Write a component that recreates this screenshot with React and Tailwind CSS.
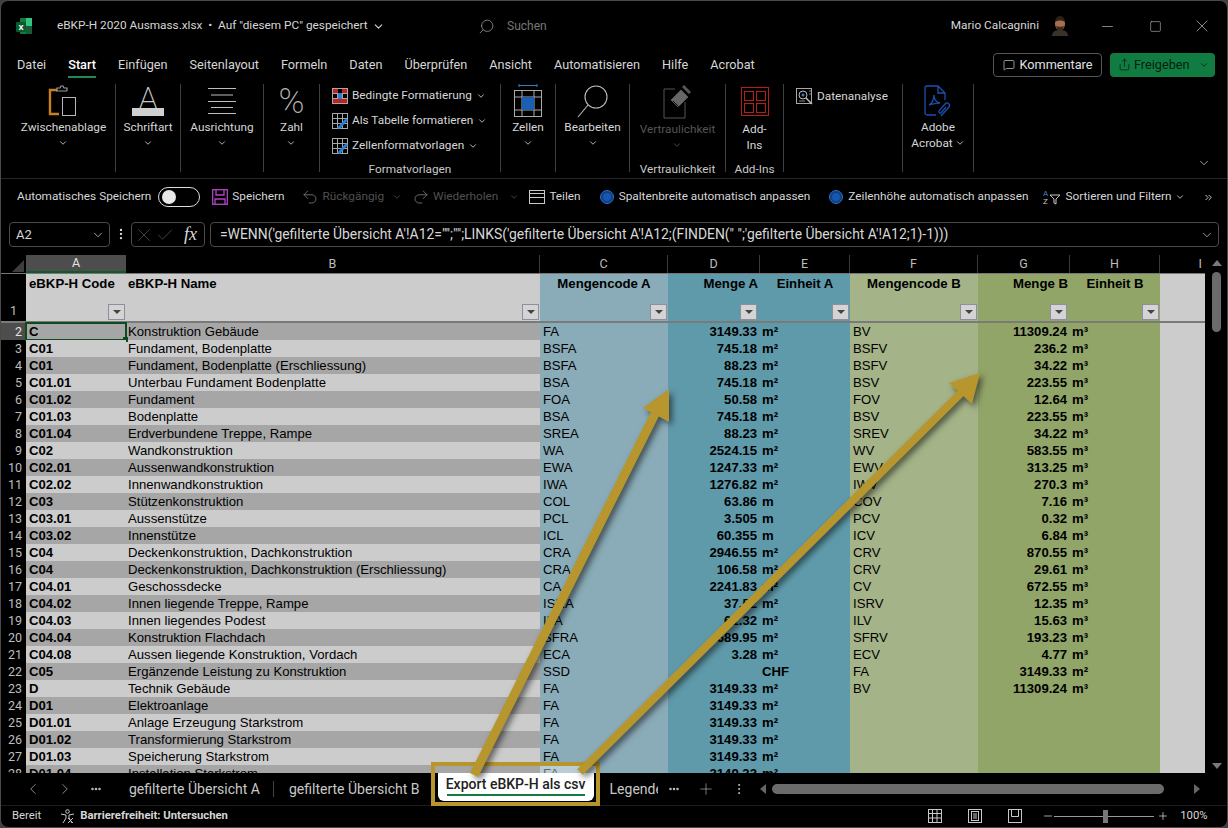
import React from "react";
import { ChevronDown, ChevronLeft, ChevronRight, Minus, Plus, X, Check, Square, MoreHorizontal, MoreVertical, Search, MessageSquare, Share, Undo2, Redo2, ChevronsRight } from "lucide-react";

const rows = [
  [2, "C", "Konstruktion Gebäude", "FA", "3149.33", "m²", "BV", "11309.24", "m³"],
  [3, "C01", "Fundament, Bodenplatte", "BSFA", "745.18", "m²", "BSFV", "236.2", "m³"],
  [4, "C01", "Fundament, Bodenplatte (Erschliessung)", "BSFA", "88.23", "m²", "BSFV", "34.22", "m³"],
  [5, "C01.01", "Unterbau Fundament Bodenplatte", "BSA", "745.18", "m²", "BSV", "223.55", "m³"],
  [6, "C01.02", "Fundament", "FOA", "50.58", "m²", "FOV", "12.64", "m³"],
  [7, "C01.03", "Bodenplatte", "BSA", "745.18", "m²", "BSV", "223.55", "m³"],
  [8, "C01.04", "Erdverbundene Treppe, Rampe", "SREA", "88.23", "m²", "SREV", "34.22", "m³"],
  [9, "C02", "Wandkonstruktion", "WA", "2524.15", "m²", "WV", "583.55", "m³"],
  [10, "C02.01", "Aussenwandkonstruktion", "EWA", "1247.33", "m²", "EWV", "313.25", "m³"],
  [11, "C02.02", "Innenwandkonstruktion", "IWA", "1276.82", "m²", "IWV", "270.3", "m³"],
  [12, "C03", "Stützenkonstruktion", "COL", "63.86", "m", "COV", "7.16", "m³"],
  [13, "C03.01", "Aussenstütze", "PCL", "3.505", "m", "PCV", "0.32", "m³"],
  [14, "C03.02", "Innenstütze", "ICL", "60.355", "m", "ICV", "6.84", "m³"],
  [15, "C04", "Deckenkonstruktion, Dachkonstruktion", "CRA", "2946.55", "m²", "CRV", "870.55", "m³"],
  [16, "C04", "Deckenkonstruktion, Dachkonstruktion (Erschliessung)", "CRA", "106.58", "m²", "CRV", "29.61", "m³"],
  [17, "C04.01", "Geschossdecke", "CA", "2241.83", "m²", "CV", "672.55", "m³"],
  [18, "C04.02", "Innen liegende Treppe, Rampe", "ISRA", "37.52", "m²", "ISRV", "12.35", "m³"],
  [19, "C04.03", "Innen liegendes Podest", "ILA", "61.32", "m²", "ILV", "15.63", "m³"],
  [20, "C04.04", "Konstruktion Flachdach", "SFRA", "689.95", "m²", "SFRV", "193.23", "m³"],
  [21, "C04.08", "Aussen liegende Konstruktion, Vordach", "ECA", "3.28", "m²", "ECV", "4.77", "m³"],
  [22, "C05", "Ergänzende Leistung zu Konstruktion", "SSD", "", "CHF", "FA", "3149.33", "m²"],
  [23, "D", "Technik Gebäude", "FA", "3149.33", "m²", "BV", "11309.24", "m³"],
  [24, "D01", "Elektroanlage", "FA", "3149.33", "m²", "", "", ""],
  [25, "D01.01", "Anlage Erzeugung Starkstrom", "FA", "3149.33", "m²", "", "", ""],
  [26, "D01.02", "Transformierung Starkstrom", "FA", "3149.33", "m²", "", "", ""],
  [27, "D01.03", "Speicherung Starkstrom", "FA", "3149.33", "m²", "", "", ""],
  [28, "D01.04", "Installation Starkstrom", "FA", "3149.33", "m²", "", "", ""],
];

const Chev = ({ className = "" }) => <ChevronDown size={10} strokeWidth={2} className={className} />;

const ExcelIcon = () => (
  <svg width="18" height="18" viewBox="0 0 18 18">
    <rect x="5" y="1" width="12" height="16" rx="1" fill="#107c41" />
    <rect x="11" y="1" width="6" height="8" fill="#33c481" />
    <rect x="11" y="9" width="6" height="8" fill="#185c37" />
    <rect x="1" y="5" width="10" height="10" rx="1" fill="#0b5a2d" />
    <text x="6" y="13" textAnchor="middle" fontSize="8" fontWeight="700" fill="#fff" fontFamily="Roboto">X</text>
  </svg>
);

const Avatar = () => (
  <svg width="18" height="20" viewBox="0 0 18 20">
    <path d="M1 20c0-4 3-6 8-6s8 2 8 6z" fill="#3a3228" />
    <ellipse cx="9" cy="8" rx="5" ry="6.5" fill="#a5704f" />
    <path d="M4 6c0-4 3-6 5-6s5 2 5 6c-2-2-8-2-10 0z" fill="#2c211a" />
    <path d="M5 10c1 4 3 5 4 5s3-1 4-5c-1 1-7 1-8 0z" fill="#3b2a20" />
  </svg>
);

const ClipboardIcon = () => (
  <svg width="30" height="32" viewBox="0 0 30 32" fill="none">
    <path d="M9 5H2v24h9" stroke="#c77f1e" strokeWidth="2.4" />
    <path d="M9 6V3h3l1-2h2l1 2h3v3M19 6H8" stroke="#9a9a9a" strokeWidth="1.2" />
    <rect x="14.500" y="12.500" width="13" height="18" stroke="#b8b8b8" />
  </svg>
);

const FontIcon = () => (
  <svg width="32" height="30" viewBox="0 0 32 30">
    <text x="16" y="22" textAnchor="middle" fontSize="30" fontWeight="200" fill="#c8c8c8" fontFamily="Roboto">A</text>
    <rect x="0" y="22" width="32" height="8" fill="#cfcfcf" />
  </svg>
);

const AlignIcon = () => (
  <svg width="30" height="26" viewBox="0 0 30 26" stroke="#bdbdbd">
    <path d="M1 .5h28M4 7h22M1 13.500h28M4 19.500h22M1 25.500h28" />
  </svg>
);

const PercentIcon = () => (
  <div className="text-[35px] leading-[35px] font-extralight text-[#b8b8b8]">%</div>
);

const SmallGrid = ({ children }) => (
  <svg width="16" height="16" viewBox="0 0 16 16" fill="none" className="shrink-0">
    <rect x=".5" y=".5" width="15" height="15" stroke="#a8a8a8" />
    <path d="M.5 5.500h15M.5 10.500h15M5.500.5v15M10.500.5v15" stroke="#a8a8a8" />
    {children}
  </svg>
);

const CellsIcon = () => (
  <svg width="30" height="34" viewBox="0 0 30 34" fill="none">
    <path d="M6 1.500h18M6 0v3M24 0v3" stroke="#2f7fc4" />
    <rect x="1.500" y="6.500" width="27" height="26" stroke="#aaa" />
    <path d="M1.500 13h27M1.500 26h27M9 6.500v26M21 6.500v26" stroke="#aaa" />
    <rect x="9" y="13" width="12" height="13" fill="#1c5fb0" />
  </svg>
);

const FindIcon = () => (
  <svg width="32" height="34" viewBox="0 0 32 34" fill="none" stroke="#bdbdbd" strokeWidth="1.100">
    <circle cx="19" cy="13" r="11" />
    <path d="M11 21 1 33" />
  </svg>
);

const SensitivityIcon = () => (
  <svg width="28" height="34" viewBox="0 0 28 34" fill="none" stroke="#555">
    <path d="M12 4H1v29h21V17" />
    <path d="M8 15 18 5l7 7-10 10z" fill="#666" />
    <path d="M20 1l7 7" strokeWidth="3" />
    <path d="M10 16l6 6" stroke="#111" />
  </svg>
);

const AddInsIcon = () => (
  <svg width="28" height="30" viewBox="0 0 28 30" fill="none" stroke="#b3201b">
    <rect x=".5" y=".5" width="27" height="28" />
    <rect x="3.500" y="4.500" width="9" height="9" />
    <rect x="15.500" y="4.500" width="9" height="9" />
    <rect x="3.500" y="16.500" width="9" height="9" />
    <rect x="15.500" y="16.500" width="9" height="9" />
  </svg>
);

const AnalysisIcon = () => (
  <svg width="17" height="17" viewBox="0 0 17 17" fill="none" className="shrink-0">
    <rect x=".5" y=".5" width="15" height="15" stroke="#a8a8a8" />
    <circle cx="7" cy="7" r="4" stroke="#bdbdbd" />
    <circle cx="7" cy="7" r="1.500" fill="#2f7fc4" />
    <path d="M10 10l6 6" stroke="#bdbdbd" strokeWidth="1.500" />
    <path d="M13 3h2M13 6h2M3 13h6" stroke="#888" />
  </svg>
);

const AcrobatIcon = () => (
  <svg width="28" height="34" viewBox="0 0 28 34" fill="none" stroke="#1b4fb0" strokeWidth="1.300">
    <path d="M12 30H3a2 2 0 0 1-2-2V3a2 2 0 0 1 2-2h11l7 7v7M14 1v7h7" />
    <path d="M5 20c3-1 5-6 5-10 0 4 2 7 6 8-4 0-7 1-11 2z" />
    <path d="M17 31l8-9a2.500 2.500 0 0 0-4-3l-6 7a1.500 1.500 0 0 0 2 2l5-6" />
  </svg>
);

const BigButton = ({ icon, label, label2, chev = true, dim = false, iconClass = "h-[34px]" }) => (
  <div className={`flex flex-col items-center text-[11.8px] leading-[16px] ${dim ? "text-[#555]" : "text-[#d6d6d6]"}`}>
    <div className={`flex items-center justify-center ${iconClass}`}>{icon}</div>
    <div className="mt-[1px] whitespace-nowrap">{label}</div>
    {label2 && <div className="whitespace-nowrap">{label2}</div>}
    {chev && <Chev className="mt-[3px]" />}
  </div>
);

const Group = ({ className, label, children }) => (
  <div className={`h-[88px] shrink-0 border-r border-[#3f3f3f] flex flex-col items-center ${className}`}>
    <div className="h-[74px] shrink-0 w-full flex justify-center">{children}</div>
    {label && <div className="mt-[4px] shrink-0 text-[11.8px] leading-[14px] text-[#c8c8c8] whitespace-nowrap">{label}</div>}
  </div>
);

const StyleRow = ({ icon, label }) => (
  <div className="flex items-center gap-[4px] h-[26px] text-[11.8px] text-[#d6d6d6] whitespace-nowrap">
    {icon}
    <span>{label}</span>
    <Chev />
  </div>
);

const FilterBtn = () => (
  <div className="w-[17px] h-[16px] border border-[#8d8f9c] bg-[#d4d4d4] flex items-center justify-center mb-[1px] mr-[1px]">
    <div className="w-0 h-0 border-x-[4px] border-x-transparent border-t-[4px] border-t-[#444]" />
  </div>
);

const HeadCell = ({ className, textClass = "", label }) => (
  <div className={`h-full shrink-0 flex flex-col justify-between ${className}`}>
    <div className={`font-bold text-[13.2px] leading-[17px] pt-[1px] whitespace-nowrap ${textClass}`}>{label}</div>
    <div className="flex justify-end"><FilterBtn /></div>
  </div>
);

const ColHead = ({ className, label }) => (
  <div className={`h-full shrink-0 flex items-center justify-center border-r border-[#3a3a3a] text-[#bdbdbd] text-[12.5px] ${className}`}>{label}</div>
);

const Row = ({ row }) => {
  const [n, a, b, c, d, e, f, g, h] = row;
  const even = n % 2 === 0;
  const stripe = even ? "bg-[#a6a6a6]" : "bg-[#cccccc]";
  return (
    <div className="flex h-[17px] shrink-0 text-[13.15px] leading-[17px] text-black whitespace-nowrap">
      <div className={`w-[25px] shrink-0 pr-[4px] text-right text-[12.5px] [font-family:Roboto,sans-serif] ${n === 2 ? "bg-[#4d4d4d] text-[#e5e5e5]" : "text-[#bdbdbd]"}`}>{n}</div>
      <div className={`relative w-[100px] shrink-0 pl-[3px] font-bold ${stripe}`}>
        {a}
        {n === 2 && (
          <div className="absolute -inset-[1px] border-2 border-[#0c4a1f]">
            <div className="absolute -right-[3px] -bottom-[3px] w-[5px] h-[5px] bg-[#0c4a1f]" />
          </div>
        )}
      </div>
      <div className={`w-[414px] shrink-0 pl-[2px] overflow-hidden ${stripe}`}>{b}</div>
      <div className="w-[128px] shrink-0 pl-[3px] bg-[#8aacb8]">{c}</div>
      <div className="w-[92px] shrink-0 pr-[3px] text-right font-bold bg-[#5f9aab]">{d}</div>
      <div className="w-[90px] shrink-0 pl-[2px] font-bold bg-[#5f9aab]">{e}</div>
      <div className="w-[128px] shrink-0 pl-[3px] bg-[#a5b388]">{f}</div>
      <div className="w-[92px] shrink-0 pr-[3px] text-right font-bold bg-[#92a568]">{g}</div>
      <div className="w-[90px] shrink-0 pl-[2px] font-bold bg-[#92a568]">{h}</div>
      <div className="w-[45px] shrink-0 bg-[#cccccc]" />
    </div>
  );
};

export default function App() {
  return (
    <div className="relative w-[1228px] h-[828px] overflow-hidden bg-[#404040]">
      <div className="w-full h-full flex flex-col bg-black border border-[#4a4a4a] rounded-[8px] overflow-hidden text-[#d6d6d6] [font-family:Roboto,sans-serif] text-[13px]">
        {/* Title bar */}
        <div className="h-[44px] shrink-0 flex items-center pl-[14px] pt-[6px]">
          <ExcelIcon />
          <div className="ml-[24px] flex items-center w-[421px] text-[11.8px] whitespace-nowrap">
            <span>eBKP-H 2020 Ausmass.xlsx&nbsp;&nbsp;•&nbsp;&nbsp;Auf "diesem PC" gespeichert</span>
            <ChevronDown size={13} className="ml-[4px]" />
          </div>
          <Search size={17} strokeWidth={1.1} className="-scale-x-100 text-[#9a9a9a]" />
          <span className="ml-[12px] text-[12px] text-[#777]">Suchen</span>
          <span className="ml-auto text-[11.8px] whitespace-nowrap">Mario Calcagnini</span>
          <div className="ml-[12px]"><Avatar /></div>
          <Minus size={17} strokeWidth={0.9} className="ml-[30px] text-[#ccc]" />
          <Square size={13} strokeWidth={1} className="ml-[33px] text-[#ccc]" />
          <X size={20} strokeWidth={0.8} className="ml-[30px] mr-[15px] text-[#ccc]" />
        </div>
        {/* Tabs */}
        <div className="h-[39px] shrink-0 flex items-center pl-[16px] pr-[12px] gap-[22px] text-[12.7px]">
          <span>Datei</span>
          <span className="relative font-medium text-white">
            Start
            <span className="absolute left-0 right-0 -bottom-[4px] h-[2px] bg-[#1f8a52]" />
          </span>
          <span>Einfügen</span>
          <span>Seitenlayout</span>
          <span>Formeln</span>
          <span>Daten</span>
          <span>Überprüfen</span>
          <span>Ansicht</span>
          <span>Automatisieren</span>
          <span>Hilfe</span>
          <span>Acrobat</span>
          <div className="ml-auto flex items-center gap-[8px]">
            <div className="w-[109px] h-[24px] rounded-[4px] border border-[#555] flex items-center justify-center gap-[5px] text-[#e0e0e0]">
              <MessageSquare size={12} strokeWidth={1.3} />
              <span>Kommentare</span>
            </div>
            <div className="w-[105px] h-[24px] rounded-[4px] bg-[#107c41] flex items-center pl-[8px] text-[#06200f]">
              <Share size={13} strokeWidth={1.4} />
              <span className="ml-[3px]">Freigeben</span>
              <Chev className="ml-[9px]" />
            </div>
          </div>
        </div>
        {/* Ribbon */}
        <div className="h-[95px] shrink-0 flex pl-[7px] pr-[16px] border-b border-[#262626]">
          <Group className="w-[108px] pl-[4px]"><BigButton icon={<ClipboardIcon />} label="Zwischenablage" /></Group>
          <Group className="w-[65px]"><BigButton icon={<FontIcon />} label="Schriftart" /></Group>
          <Group className="w-[83px]"><BigButton icon={<AlignIcon />} label="Ausrichtung" /></Group>
          <Group className="w-[56px]"><BigButton icon={<PercentIcon />} label="Zahl" /></Group>
          <Group className="w-[181px]" label="Formatvorlagen">
            <div className="flex flex-col w-full pl-[12px] -mt-[1px]">
              <StyleRow label="Bedingte Formatierung" icon={<SmallGrid><path d="M1 1h5v4H1zM10 1h5v4h-5zM1 11h14v4H1z" fill="#c0231f" /><path d="M6 5h4v6H6z" fill="#2a7fd0" /></SmallGrid>} />
              <StyleRow label="Als Tabelle formatieren" icon={<SmallGrid><path d="M5 15l9-10 2 2-8 9z" fill="#2a7fd0" /></SmallGrid>} />
              <StyleRow label="Zellenformatvorlagen" icon={<SmallGrid><path d="M5 15l9-10 2 2-8 9z" fill="#2a7fd0" /></SmallGrid>} />
            </div>
          </Group>
          <Group className="w-[55px]"><BigButton icon={<CellsIcon />} label="Zellen" /></Group>
          <Group className="w-[74px]"><BigButton icon={<FindIcon />} label="Bearbeiten" /></Group>
          <Group className="w-[96px]" label="Vertraulichkeit"><BigButton dim icon={<SensitivityIcon />} label="Vertraulichkeit" iconClass="h-[36px]" /></Group>
          <Group className="w-[58px]" label="Add-Ins"><BigButton chev={false} icon={<AddInsIcon />} label="Add-" label2="Ins" iconClass="h-[36px]" /></Group>
          <Group className="w-[119px]">
            <div className="w-full pl-[12px] pt-[4px] flex items-start gap-[4px] text-[11.8px] whitespace-nowrap">
              <AnalysisIcon /><span>Datenanalyse</span>
            </div>
          </Group>
          <Group className="w-[71px]">
            <div className="flex flex-col items-center text-[11.8px] leading-[16px]">
              <div className="h-[35px] flex items-center"><AcrobatIcon /></div>
              <div>Adobe</div>
              <div className="flex items-center gap-[2px]">Acrobat <Chev /></div>
            </div>
          </Group>
          <div className="ml-auto h-[88px] flex items-end pb-[2px]">
            <ChevronDown size={14} strokeWidth={1.4} className="text-[#bbb]" />
          </div>
        </div>
        {/* Quick access */}
        <div className="h-[36px] shrink-0 flex items-center pl-[16px] text-[11.8px] whitespace-nowrap">
          <span>Automatisches Speichern</span>
          <div className="ml-[7px] w-[42px] h-[20px] rounded-full border border-[#ddd] flex items-center pl-[3px]">
            <div className="w-[14px] h-[14px] rounded-full bg-[#e8e8e8]" />
          </div>
          <svg width="16" height="16" viewBox="0 0 16 16" fill="none" className="ml-[12px]" stroke="#b146c2" strokeWidth="1.300">
            <rect x=".7" y=".7" width="14.600" height="14.600" />
            <path d="M4 1v5h8V1M3 15v-5h10v5" />
          </svg>
          <span className="ml-[4px]">Speichern</span>
          <Undo2 size={18} strokeWidth={1} className="ml-[16px] text-[#888]" />
          <span className="ml-[4px] text-[#505050]">Rückgängig</span>
          <Chev className="ml-[8px] text-[#505050]" />
          <Redo2 size={18} strokeWidth={1} className="ml-[10px] text-[#888]" />
          <span className="ml-[3px] text-[#505050]">Wiederholen</span>
          <Chev className="ml-[11px] text-[#505050]" />
          <svg width="16" height="14" viewBox="0 0 16 14" fill="none" stroke="#c8c8c8" className="ml-[10px]">
            <rect x=".5" y=".5" width="15" height="13" />
            <path d="M.5 3.500h15M.5 7.500h15" />
          </svg>
          <span className="ml-[4px]">Teilen</span>
          <div className="ml-[19px] w-[14px] h-[14px] rounded-full border border-[#2a6fc0] bg-[#0f3f86] flex items-center justify-center">
            <div className="w-[8px] h-[8px] rounded-full bg-[#1558ad]" />
          </div>
          <span className="ml-[5px]">Spaltenbreite automatisch anpassen</span>
          <div className="ml-[19px] w-[14px] h-[14px] rounded-full border border-[#2a6fc0] bg-[#0f3f86] flex items-center justify-center">
            <div className="w-[8px] h-[8px] rounded-full bg-[#1558ad]" />
          </div>
          <span className="ml-[5px]">Zeilenhöhe automatisch anpassen</span>
          <svg width="18" height="16" viewBox="0 0 18 16" fill="none" className="ml-[15px]">
            <text x="0" y="7" fontSize="8" fill="#3a8ad0" fontFamily="Roboto">A</text>
            <text x="0" y="15" fontSize="8" fill="#c8c8c8" fontFamily="Roboto">Z</text>
            <path d="M7 6h10l-4 4v5l-2-1v-4z" stroke="#c8c8c8" />
          </svg>
          <span className="ml-[4px]">Sortieren und Filtern</span>
          <Chev className="ml-[3px]" />
          <ChevronsRight size={11} className="ml-[18px]" />
        </div>
        {/* Formula bar */}
        <div className="h-[40px] shrink-0 flex items-start pt-[7px] pl-[8px] pr-[8px]">
          <div className="w-[101px] h-[25px] rounded-[4px] border border-[#4a4a4a] flex items-center justify-between pl-[6px] pr-[4px] text-[13px]">
            <span>A2</span>
            <ChevronDown size={14} strokeWidth={1.3} />
          </div>
          <MoreVertical size={14} strokeWidth={2} className="ml-[4px] mt-[5px]" />
          <div className="ml-[3px] w-[74px] h-[25px] rounded-[4px] border border-[#4a4a4a] flex items-center pl-[1px] text-[#5a5a5a]">
            <X size={22} strokeWidth={0.8} />
            <Check size={20} strokeWidth={0.9} />
            <span className="ml-[9px] text-[#d8d8d8] italic text-[18px] [font-family:'Liberation_Serif',serif]">fx</span>
          </div>
          <div className="ml-[5px] flex-1 h-[25px] rounded-[4px] border border-[#4a4a4a] flex items-center justify-between pl-[9px] pr-[4px] text-[13.9px] text-[#d8d8d8] whitespace-nowrap">
            <span>{`=WENN('gefilterte Übersicht A'!A12="";"";LINKS('gefilterte Übersicht A'!A12;(FINDEN(" ";'gefilterte Übersicht A'!A12;1)-1)))`}</span>
            <ChevronDown size={14} strokeWidth={1.2} />
          </div>
        </div>
        {/* Sheet */}
        <div className="h-[518px] shrink-0 flex overflow-hidden">
          <div className="w-[1204px] shrink-0 flex flex-col [font-family:'Liberation_Sans',Arial,sans-serif] overflow-hidden">
            <div className="h-[19px] shrink-0 flex [font-family:Roboto,sans-serif] border-b border-[#777]">
              <div className="w-[25px] shrink-0 flex justify-end items-end pr-[2px] pb-[1px]">
                <div className="w-0 h-0 border-l-[12px] border-l-transparent border-b-[12px] border-b-[#3d3d3d]" />
              </div>
              <div className="w-[100px] shrink-0 h-full bg-[#4d4d4d] border-b-2 border-[#0f5a2a] flex items-center justify-center text-[12.5px] text-[#e5e5e5]">A</div>
              <ColHead className="w-[414px]" label="B" />
              <ColHead className="w-[128px]" label="C" />
              <ColHead className="w-[92px]" label="D" />
              <ColHead className="w-[90px]" label="E" />
              <ColHead className="w-[128px]" label="F" />
              <ColHead className="w-[92px]" label="G" />
              <ColHead className="w-[90px]" label="H" />
              <div className="w-[45px] shrink-0 flex items-center justify-end pr-[3px] text-[12.5px] text-[#bdbdbd]">I</div>
            </div>
            <div className="h-[49px] shrink-0 flex text-black border-b-2 border-[#7a7a7a]">
              <div className="w-[25px] shrink-0 flex items-end justify-end pr-[9px] text-[12.5px] text-[#bdbdbd] [font-family:Roboto,sans-serif]">1</div>
              <HeadCell className="w-[100px] bg-[#cccccc] pl-[3px]" label="eBKP-H Code" />
              <HeadCell className="w-[414px] bg-[#cccccc] pl-[2px]" label="eBKP-H Name" />
              <HeadCell className="w-[128px] bg-[#8aacb8]" textClass="text-center" label="Mengencode A" />
              <HeadCell className="w-[92px] bg-[#5f9aab] pr-[2px]" textClass="text-right" label="Menge A" />
              <HeadCell className="w-[90px] bg-[#5f9aab]" textClass="text-center" label="Einheit A" />
              <HeadCell className="w-[128px] bg-[#a5b388]" textClass="text-center" label="Mengencode B" />
              <HeadCell className="w-[92px] bg-[#92a568] pr-[2px]" textClass="text-right" label="Menge B" />
              <HeadCell className="w-[90px] bg-[#92a568]" textClass="text-center" label="Einheit B" />
              <div className="w-[45px] shrink-0 bg-[#cccccc]" />
            </div>
            {rows.map((r) => <Row key={r[0]} row={r} />)}
          </div>
          <div className="flex-1 flex flex-col items-center pt-[5px] pl-[1px]">
            <div className="w-0 h-0 border-x-[5px] border-x-transparent border-b-[6px] border-b-[#7a7a7a]" />
            <div className="mt-[6px] w-[9px] h-[60px] rounded-full bg-[#6b6b6b]" />
            <div className="mt-auto mb-[4px] w-0 h-0 border-x-[5px] border-x-transparent border-t-[6px] border-t-[#7a7a7a]" />
          </div>
        </div>
        {/* Sheet tabs */}
        <div className="h-[32px] shrink-0 flex items-center text-[14px] whitespace-nowrap text-[#c8c8c8]">
          <ChevronLeft size={18} strokeWidth={0.9} className="ml-[23px]" />
          <ChevronRight size={18} strokeWidth={0.9} className="ml-[14px]" />
          <MoreHorizontal size={12} strokeWidth={3} className="ml-[16px]" />
          <span className="ml-[27px]">gefilterte Übersicht A</span>
          <div className="ml-[13px] w-px h-[16px] bg-[#444]" />
          <span className="ml-[15px]">gefilterte Übersicht B</span>
          <div className="ml-[18px] w-[156px] h-[28px] -mt-[4px] bg-white rounded-b-[6px] flex flex-col items-center pt-[2px] text-[#222] font-medium">
            <span className="leading-[18px]">Export eBKP-H als csv</span>
            <div className="mt-[1px] w-[138px] h-[2px] bg-[#107c41]" />
          </div>
          <span className="ml-[16px] w-[48px] overflow-hidden">Legende</span>
          <MoreHorizontal size={12} strokeWidth={3} className="ml-[10px]" />
          <Plus size={18} strokeWidth={0.8} className="ml-[17px]" />
          <MoreVertical size={14} strokeWidth={1.5} className="ml-[17px]" />
          <div className="ml-[14px] w-0 h-0 border-y-[5px] border-y-transparent border-r-[6px] border-r-[#666]" />
          <div className="ml-[6px] w-[392px] h-[10px] rounded-full bg-[#6b6b6b]" />
          <div className="ml-[30px] w-0 h-0 border-y-[5px] border-y-transparent border-l-[6px] border-l-[#666]" />
        </div>
        {/* Status bar */}
        <div className="h-[21px] shrink-0 flex items-center border-t border-[#1c1c1c] pl-[11px] text-[11.3px] whitespace-nowrap">
          <span>Bereit</span>
          <svg width="15" height="15" viewBox="0 0 15 15" fill="none" stroke="#c8c8c8" className="ml-[19px]">
            <circle cx="7.500" cy="2.500" r="1.800" />
            <path d="M1 5l5 1v3l-3 5M14 5L9 6v3l3 5" />
            <path d="M8 9l5 5M13 9l-5 5" />
          </svg>
          <span className="ml-[5px] font-bold w-[148px]">Barrierefreiheit: Untersuchen</span>
          <svg width="14" height="14" viewBox="0 0 14 14" fill="none" stroke="#c8c8c8" className="ml-[700px]">
            <rect x=".5" y=".5" width="13" height="13" />
            <path d="M.5 4.500h13M.5 9h13M4.500.5v13M9 .5v13" />
          </svg>
          <svg width="14" height="14" viewBox="0 0 14 14" fill="none" stroke="#c8c8c8" className="ml-[26px]">
            <rect x=".5" y=".5" width="13" height="13" />
            <rect x="3.500" y="2.500" width="7" height="9" />
            <path d="M5 5h4M5 7h4M5 9h4" />
          </svg>
          <svg width="14" height="14" viewBox="0 0 14 14" fill="none" stroke="#c8c8c8" className="ml-[26px]">
            <rect x=".5" y=".5" width="13" height="13" />
            <path d="M3.500.5v7h7v-7" />
          </svg>
          <Minus size={12} strokeWidth={1.5} className="ml-[20px]" />
          <div className="relative w-[100px] h-px bg-[#999]">
            <div className="absolute left-[49px] -top-[6px] w-[5px] h-[13px] bg-[#777]" />
          </div>
          <Plus size={12} strokeWidth={1.5} className="ml-[3px]" />
          <span className="ml-[11px]">100%</span>
        </div>
      </div>
      {/* Annotation overlay */}
      <div className="absolute left-[540px] top-[766px] w-[56px] h-[7px] bg-white/40 pointer-events-none" />
      <div className="absolute left-[431px] top-[762px] w-[169px] h-[44px] border-[4px] border-[#b8962e] pointer-events-none" />
      <svg width="1228" height="828" viewBox="0 0 1228 828" className="absolute left-0 top-0 pointer-events-none drop-shadow-[3px_3px_3px_rgba(0,0,0,0.55)]">
        <path d="M474 775 657 410" stroke="#b8962e" strokeWidth="9" fill="none" />
        <path d="M669 389 643 408 669 422z" fill="#b8962e" />
        <path d="M580 772 962 392" stroke="#b8962e" strokeWidth="8" fill="none" />
        <path d="M980 373 949 383 972 404z" fill="#b8962e" />
      </svg>
    </div>
  );
}
